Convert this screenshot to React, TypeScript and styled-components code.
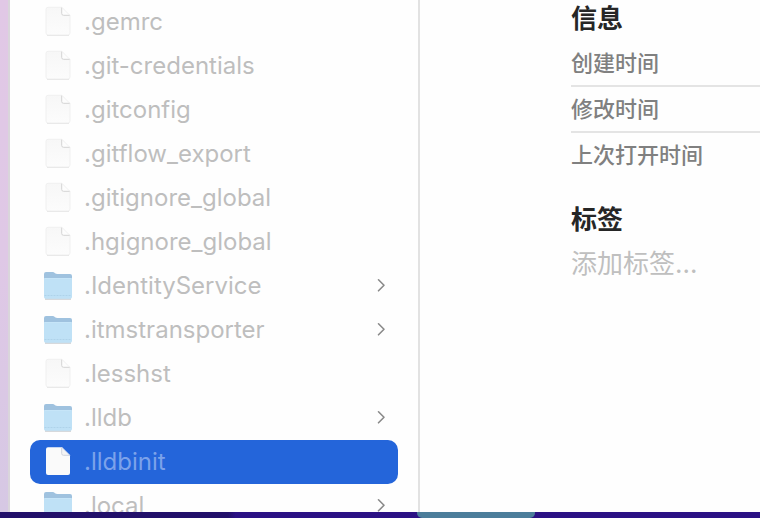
import React, { useState } from "react";
import styled, { createGlobalStyle } from "styled-components";

const GlobalStyle = createGlobalStyle`
  *, *::before, *::after { box-sizing: border-box; }
  body {
    margin: 0;
    background: #fff;
    font-family: Inter, "Noto Sans CJK SC", sans-serif;
    overflow: hidden;
  }
`;

const Desktop = styled.div`
  display: grid;
  grid-template-rows: minmax(0, 1fr) 6px;
  height: 100vh;
  background: #28127c;
`;

const Window = styled.main`
  display: grid;
  grid-template-columns: 10px minmax(0, 410fr) minmax(0, 340fr);
  min-height: 0;
  overflow: hidden;
  background: #fefefe;
`;

const Edge = styled.div`
  background: linear-gradient(#e1c8e6, #dfc8e6 50%, #d6c8e4);
  border-right: 2px solid #d9d5db;
`;

const Column = styled.ul`
  margin: 0;
  padding: 0 20px;
  list-style: none;
  overflow: hidden;
  border-right: 2px solid #e2e2e2;
`;

const Row = styled.button<{ $selected: boolean }>`
  display: flex;
  align-items: center;
  gap: 10px;
  width: 100%;
  height: 44px;
  padding: 0 10px 0 12px;
  border: 0;
  border-radius: 10px;
  background: ${(p) => (p.$selected ? "#2465da" : "transparent")};
  color: ${(p) => (p.$selected ? "#7ca2ea" : "#bebebe")};
  font-family: inherit;
  font-size: 24px;
  line-height: 28px;
  text-align: left;
  outline: none;
`;

const Name = styled.span`
  flex: 1;
  min-width: 0;
  white-space: nowrap;
`;

const Icon = styled.svg`
  flex: none;
  display: block;
`;

const Info = styled.section`
  padding: 0 0 0 151px;
  overflow: hidden;
`;

const Heading = styled.h2`
  display: block;
  margin: 0;
  font-size: 26px;
  line-height: 38px;
  font-weight: 700;
  color: #262626;
`;

const Details = styled.dl`
  margin: 3px 0 24px;
`;

const Detail = styled.dt`
  height: 46px;
  padding-top: 6px;
  font-size: 22px;
  line-height: 32px;
  font-weight: 500;
  color: #808080;
  white-space: nowrap;
  border-bottom: 2px solid #e4e4e4;

  &:last-child {
    height: 44px;
    border-bottom: 0;
  }
`;

const TagInput = styled.input`
  display: block;
  width: 100%;
  height: 36px;
  margin-top: 6px;
  padding: 0;
  border: 0;
  outline: none;
  background: transparent;
  font-family: inherit;
  font-size: 26px;
  color: #262626;

  &::placeholder {
    color: #bfbfbf;
    opacity: 1;
  }
`;

const Dock = styled.div`
  display: grid;
  grid-template-columns: 417fr 118fr 225fr;
  background: linear-gradient(90deg, #22106a 0 30%, #2b1184 31%);
`;

const DockItem = styled.div`
  grid-column: 2;
  background: #4b7d9a;
  border-radius: 0 0 5px 5px;
`;

function FileIcon({ selected }: { selected: boolean }) {
  return (
    <Icon width="32" height="32" viewBox="0 0 32 32" aria-hidden="true">
      <defs>
        <linearGradient id="paper" x1="0" y1="0" x2="0" y2="1">
          <stop offset="0" stopColor="#f7f7f7" />
          <stop offset="1" stopColor="#fcfcfc" />
        </linearGradient>
      </defs>
      {!selected && <path d="M5 29.200H27" stroke="#e2e2e2" strokeWidth="1.200" />}
      <path
        d="M6 1.300H20L28 9.500V27Q28 29 26 29H6Q4 29 4 27V3.300Q4 1.300 6 1.300Z"
        fill={selected ? "#fafafa" : "url(#paper)"}
      />
      {!selected && (
        <path d="M28 9.500V27Q28 29 26 29H6Q4 29 4 27V3.300Q4 1.300 6 1.300H20" fill="none" stroke="#eeeeee" strokeWidth="0.800" />
      )}
      <path d="M19.700 1.300V7.500Q19.700 9.300 21.500 9.300H28Z" fill={selected ? "#f4f4f4" : "#fdfdfd"} />
      <path
        d="M19.700 1.500V7.500Q19.700 9.300 21.500 9.300H27.800"
        fill="none"
        stroke={selected ? "#cfd3dc" : "#d4d4d4"}
        strokeWidth="1"
      />
      <path d="M20 1.500L28 9.500" stroke={selected ? "#b9c9ec" : "#ececec"} strokeWidth="0.700" />
    </Icon>
  );
}

function FolderIcon() {
  return (
    <Icon width="32" height="32" viewBox="0 0 32 32" aria-hidden="true">
      <path d="M3 29H29" stroke="#c9cdd0" strokeWidth="1.500" />
      <path
        d="M2 4Q2 2 4 2H10.500Q12 2 13 3.200Q14 4 15.500 4H28Q30 4 30 6V12H2Z"
        fill="#9fc2df"
      />
      <path d="M2 9Q2 8 3 8H29Q30 8 30 9V27Q30 28.700 28.300 28.700H3.700Q2 28.700 2 27Z" fill="#bfe1f6" />
      <path d="M2.500 8.500H29.500" stroke="#c6e5f8" />
      <path d="M2.500 25.500H29.500" stroke="#afd3ea" strokeDasharray="2 1" />
    </Icon>
  );
}

function Chevron() {
  return (
    <Icon width="14" height="16" viewBox="0 0 14 16" aria-hidden="true">
      <path
        d="M4.500 1.800L10 7.300L4.500 12.800"
        fill="none"
        stroke="#8a8a8a"
        strokeWidth="1.600"
        strokeLinecap="round"
        strokeLinejoin="round"
      />
    </Icon>
  );
}

const entries: { name: string; folder?: boolean }[] = [
  { name: ".gemrc" },
  { name: ".git-credentials" },
  { name: ".gitconfig" },
  { name: ".gitflow_export" },
  { name: ".gitignore_global" },
  { name: ".hgignore_global" },
  { name: ".IdentityService", folder: true },
  { name: ".itmstransporter", folder: true },
  { name: ".lesshst" },
  { name: ".lldb", folder: true },
  { name: ".lldbinit" },
  { name: ".local", folder: true },
];

const details = ["创建时间", "修改时间", "上次打开时间"];

export default function App() {
  const [selected, setSelected] = useState(".lldbinit");
  return (
    <>
      <GlobalStyle />
      <Desktop>
        <Window>
          <Edge />
          <Column>
            {entries.map(({ name, folder }) => (
              <li key={name}>
                <Row
                  type="button"
                  $selected={name === selected}
                  aria-pressed={name === selected}
                  onClick={() => setSelected(name)}
                >
                  {folder ? <FolderIcon /> : <FileIcon selected={name === selected} />}
                  <Name>{name}</Name>
                  {folder && <Chevron />}
                </Row>
              </li>
            ))}
          </Column>
          <Info>
            <Heading>信息</Heading>
            <Details>
              {details.map((label) => (
                <Detail key={label}>{label}</Detail>
              ))}
            </Details>
            <Heading as="label" htmlFor="tags">
              标签
            </Heading>
            <TagInput id="tags" type="text" placeholder="添加标签…" />
          </Info>
        </Window>
        <Dock>
          <DockItem />
        </Dock>
      </Desktop>
    </>
  );
}
